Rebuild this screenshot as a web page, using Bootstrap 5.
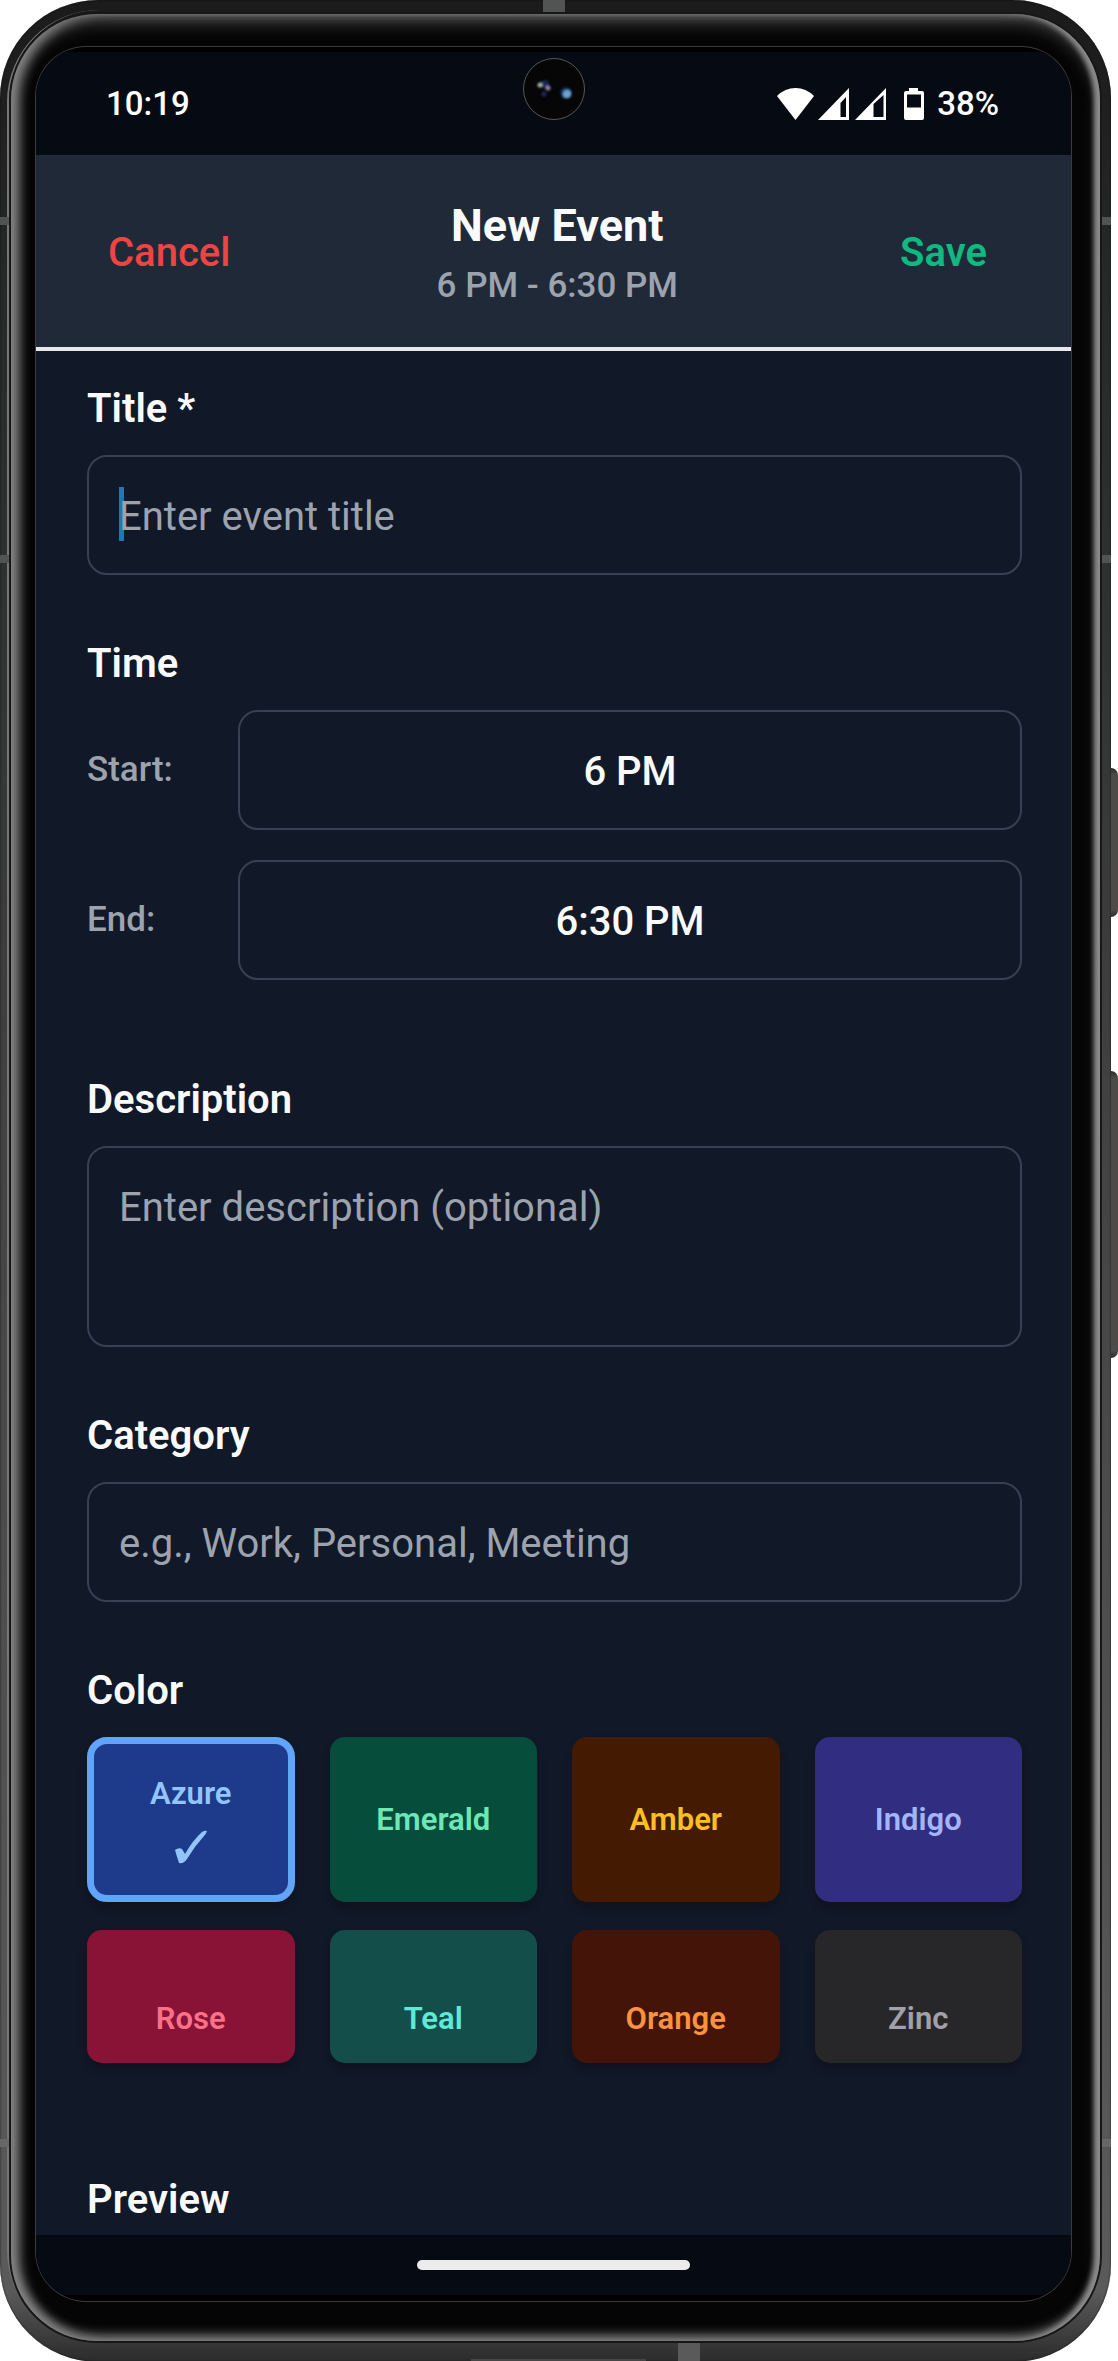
<!DOCTYPE html>
<html lang="en">
<head>
<meta charset="utf-8">
<meta name="viewport" content="width=device-width, initial-scale=1">
<title>New Event</title>
<link rel="stylesheet" href="https://cdn.jsdelivr.net/npm/bootstrap@5.3.0/dist/css/bootstrap.min.css">
<style>
  body { background: #fff; font-family: Roboto, "Noto Sans", sans-serif; font-size: 40px; line-height: 48px; color: #f9fafb; overflow-x: hidden; }

  /* Handset */
  .phone { margin-right: 7px; padding: 14px 11px 21px; border-radius: 98px; box-shadow: inset 0 0 2px #111;
    background: linear-gradient(#1c1b1b 0, #1f1f1f 4%, #272928 12%, #323433 28%, #434443 50%, #515151 75%, #5a5a5a 97%, #2b2b2b 100%); }
  .phone::before { content: ""; position: absolute; inset: 10px auto 20px 7px; width: 200px; border-left: 2px solid #777; border-radius: 92px 0 0 92px; }
  .bezel { padding: 33px 29px 40px 25px; border-radius: 86px; background: #050505; border: 0;
    box-shadow: inset 9px 0 12px -1px #858585, inset -7px 0 5px -1px #8c8c8c, inset 0 9px 18px -2px #4c4c4c, inset 0 -8px 11px -2px #707070, 0 0 0 2px #171717; }
  .screen { border-radius: 50px; background: #000; padding: 5px 0 6px; box-shadow: 0 0 0 1px #3b3b3b; }
  .seam { position: absolute; background: #525353; }
  .seam-side { width: 9px; height: 8px; }
  .seam-l { left: 0; } .seam-r { right: 0; }
  .seam-1 { top: 217px; } .seam-2 { top: 555px; } .seam-3 { top: 2139px; background: #676767; }
  .seam-top { top: 0; left: 543px; width: 22px; height: 13px; }
  .seam-foot { bottom: 0; left: 678px; width: 22px; height: 20px; background: #5a5a5a; }
  .seam-port { bottom: 0; left: 471px; width: 175px; height: 3px; background: #464646; }
  .side-key { position: absolute; left: 100%; width: 7px; border-radius: 0 7px 7px 0; background: linear-gradient(#2b2b2b 0, #4c4b4a 7px, #4c4b4a calc(100% - 7px), #2b2b2b 100%); }
  .key-power { top: 768px; height: 149px; }
  .key-volume { top: 1071px; height: 287px; }

  /* System bars */
  .system-bar { background: #060b13; }
  .status { height: 103px; padding: 0 72px 0 70px; font-size: 33px; line-height: 40px; font-weight: 500; color: #fff; }
  .camera { position: absolute; top: 6px; left: 50%; transform: translateX(-50%); }
  .home-bar { height: 60px; }
  .home-pill { width: 273px; height: 10px; background: #ececec; }

  /* App bar */
  .app-bar { background: #1f2937; padding: 44px 84px 40px 72px; border-bottom: 4px double #e5e7eb; border-bottom-style: solid; }
  .app-bar h1 { font-size: 45px; line-height: 54px; font-weight: 700; }
  .app-bar p { font-size: 35px; line-height: 42px; color: #9ca3af; font-weight: 500; }
  .bar-action { font-size: 40px; line-height: 48px; border: 0; }
  .act-cancel, .act-cancel:hover { color: #ef4444; font-weight: 500; }
  .act-save, .act-save:hover { color: #10b981; font-weight: 600; }

  /* Form */
  .event-form { background: #111827; padding: 34px 49px 11px 51px; }
  .field-title { font-size: 40px; line-height: 48px; font-weight: 600; margin: 0 0 22px; }
  .field-group { margin-bottom: 65px; }
  .field-group.time { margin-bottom: 96px; }
  .field-group.colors { margin-bottom: 113px; }
  .field-box, .field-box:focus, .field-box:hover { background: transparent; border: 2px solid #374151; border-radius: 20px; color: #f9fafb; font-size: 40px; line-height: 48px; padding: 36px 30px 32px; box-shadow: none; resize: none; min-height: 120px; }
  .field-box::placeholder { color: #9ca3af; opacity: 1; }
  textarea.field-box { height: 201px; display: block; }
  .caret { position: absolute; left: 32px; top: 32px; width: 5px; height: 54px; background: #1c77bc; }
  .time-row { margin-bottom: 30px; }
  .time-name { width: 151px; font-size: 35px; line-height: 42px; font-weight: 500; color: #9ca3af; }
  .time-row .field-box { font-weight: 500; padding: 36px 0 32px; }

  /* Colour swatches */
  .swatches { display: grid; grid-template-columns: repeat(4, 1fr); gap: 28px 35px; }
  .swatch { border-radius: 15px; font-size: 31px; line-height: 36px; font-weight: 600; box-shadow: 0 6px 8px rgba(0,0,0,.22); height: 165px; }
  .swatch.low { height: 133px; padding-top: 44px; }
  .swatch svg { display: none; margin-top: 18px; }
  .btn-check:checked + .swatch { border: 7px solid #60a5fa; border-radius: 20px; height: 165px; }
  .btn-check:checked + .swatch svg { display: block; }
  .azure { background: #1e3a8a; color: #93c5fd; }
  .emerald { background: #064e3b; color: #6ee7b7; }
  .amber { background: #451a03; color: #fbbf24; }
  .indigo { background: #312e81; color: #a5b4fc; }
  .rose { background: #881337; color: #fb7185; }
  .teal { background: #134e4a; color: #5eead4; }
  .orange { background: #431407; color: #fb923c; }
  .zinc { background: #27272a; color: #a1a1aa; }
</style>
<script src="https://cdn.jsdelivr.net/npm/bootstrap@5.3.0/dist/js/bootstrap.bundle.min.js"></script>
</head>
<body>
<div class="phone position-relative">
  <span class="seam seam-top"></span><span class="seam seam-foot"></span><span class="seam seam-port"></span>
  <span class="seam seam-side seam-l seam-1"></span><span class="seam seam-side seam-r seam-1"></span>
  <span class="seam seam-side seam-l seam-2"></span><span class="seam seam-side seam-r seam-2"></span>
  <span class="seam seam-side seam-l seam-3"></span><span class="seam seam-side seam-r seam-3"></span>
  <span class="side-key key-power"></span><span class="side-key key-volume"></span>

  <div class="bezel position-relative">
    <div class="screen overflow-hidden">

      <div class="system-bar status position-relative d-flex align-items-center justify-content-between">
        <span>10:19</span>
        <svg class="camera" width="62" height="62" viewBox="0 0 62 62" aria-hidden="true">
          <defs><filter id="soft" x="-1" y="-1" width="3" height="3"><feGaussianBlur stdDeviation="1.3"/></filter></defs>
          <circle cx="31" cy="31" r="30.5" fill="#060606" stroke="#6b6b6b" stroke-width=".8"/>
          <g filter="url(#soft)">
            <circle cx="22" cy="26" r="4" fill="#16284f"/><circle cx="21" cy="36" r="2.500" fill="#152c5c"/>
            <circle cx="17" cy="27" r="2.500" fill="#9fb5b0"/><circle cx="25" cy="30" r="2.500" fill="#8f84b0"/>
            <circle cx="43" cy="35" r="6" fill="#122c55"/><circle cx="44" cy="36" r="4" fill="#6aa5cf"/>
          </g>
        </svg>
        <span class="d-flex align-items-center">
          <svg width="148" height="34" viewBox="0 0 148 34" fill="#fff" aria-hidden="true">
            <path d="M0 9Q8 1 18.500 1T37 9L18.500 33Z"/>
            <path fill-rule="evenodd" d="M41 33 72 1V33ZM63.500 16V30H69V10Z"/>
            <path fill-rule="evenodd" d="M78 33 109 1V33ZM96.500 17V30H106.500V8Z"/>
            <path fill-rule="evenodd" d="M132 1h9v3h4q2 0 2 2V31q0 2-2 2H129q-2 0-2-2V6q0-2 2-2h3ZM130 7.500V20.500H144V7.500Z"/>
          </svg>
          <span class="ms-2 ps-1">38%</span>
        </span>
      </div>

      <header class="app-bar d-flex align-items-center justify-content-between">
        <button type="button" class="btn bar-action act-cancel p-0">Cancel</button>
        <div class="text-center">
          <h1 class="mb-0">New Event</h1>
          <p class="mb-0 mt-2 pt-1">6 PM - 6:30 PM</p>
        </div>
        <button type="submit" form="event" class="btn bar-action act-save p-0 ps-3">Save</button>
      </header>

      <form id="event" class="event-form">
        <div class="field-group">
          <label class="field-title d-block" for="title">Title *</label>
          <div class="position-relative">
            <span class="caret"></span>
            <input class="form-control field-box position-relative" id="title" type="text" placeholder="Enter event title">
          </div>
        </div>

        <div class="field-group time">
          <h2 class="field-title">Time</h2>
          <div class="time-row d-flex align-items-center">
            <label class="time-name flex-shrink-0" for="start">Start:</label>
            <button class="btn field-box flex-fill" id="start" type="button">6 PM</button>
          </div>
          <div class="d-flex align-items-center time-row mb-0">
            <label class="time-name flex-shrink-0" for="end">End:</label>
            <button class="btn field-box flex-fill" id="end" type="button">6:30 PM</button>
          </div>
        </div>

        <div class="field-group">
          <label class="field-title d-block" for="desc">Description</label>
          <textarea class="form-control field-box" id="desc" placeholder="Enter description (optional)"></textarea>
        </div>

        <div class="field-group">
          <label class="field-title d-block" for="cat">Category</label>
          <input class="form-control field-box" id="cat" type="text" placeholder="e.g., Work, Personal, Meeting">
        </div>

        <div class="field-group colors">
          <h2 class="field-title">Color</h2>
          <div class="swatches" role="radiogroup" aria-label="Color">
            <div><input class="btn-check" type="radio" name="color" id="c1" checked>
              <label class="swatch azure d-flex flex-column align-items-center justify-content-center" for="c1">Azure
                <svg width="32" height="34" viewBox="0 0 32 34" fill="currentColor" aria-hidden="true"><path d="M0 20Q4 17 7 19L10 24Q18 10 27 2Q30 0 32 1Q31 4 29 6Q19 17 12 29Q9 34 4 33Q2 27 0 20Z"/></svg>
              </label></div>
            <div><input class="btn-check" type="radio" name="color" id="c2"><label class="swatch emerald d-flex align-items-center justify-content-center" for="c2">Emerald</label></div>
            <div><input class="btn-check" type="radio" name="color" id="c3"><label class="swatch amber d-flex align-items-center justify-content-center" for="c3">Amber</label></div>
            <div><input class="btn-check" type="radio" name="color" id="c4"><label class="swatch indigo d-flex align-items-center justify-content-center" for="c4">Indigo</label></div>
            <div><input class="btn-check" type="radio" name="color" id="c5"><label class="swatch low rose d-flex align-items-center justify-content-center" for="c5">Rose</label></div>
            <div><input class="btn-check" type="radio" name="color" id="c6"><label class="swatch low teal d-flex align-items-center justify-content-center" for="c6">Teal</label></div>
            <div><input class="btn-check" type="radio" name="color" id="c7"><label class="swatch low orange d-flex align-items-center justify-content-center" for="c7">Orange</label></div>
            <div><input class="btn-check" type="radio" name="color" id="c8"><label class="swatch low zinc d-flex align-items-center justify-content-center" for="c8">Zinc</label></div>
          </div>
        </div>

        <h2 class="field-title mb-0">Preview</h2>
      </form>

      <div class="system-bar home-bar d-flex align-items-center justify-content-center">
        <div class="home-pill rounded-pill"></div>
      </div>
    </div>
  </div>
</div>
</body>
</html>
